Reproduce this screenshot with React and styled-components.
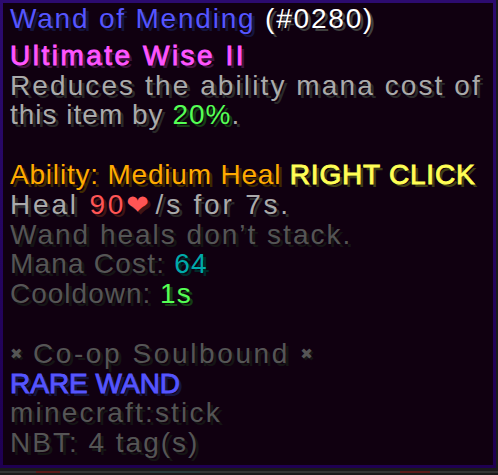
import React from "react";
import styled, { createGlobalStyle } from "styled-components";

const Global = createGlobalStyle`
  html, body { margin: 0; padding: 0; }
  body {
    background: #1a1a1a;
    width: 498px;
    height: 475px;
    overflow: hidden;
  }
`;

const MC = {
  white: ["#ffffff", "#3f3f3f"],
  blue: ["#5555ff", "#15153f"],
  pink: ["#ff55ff", "#3f153f"],
  gray: ["#aaaaaa", "#2a2a2a"],
  dgray: ["#555555", "#151515"],
  green: ["#55ff55", "#153f15"],
  gold: ["#ffaa00", "#3f2a00"],
  yellow: ["#ffff55", "#3f3f15"],
  red: ["#ff5555", "#3f1515"],
  aqua: ["#00aaaa", "#002a2a"],
};

const Tooltip = styled.div`
  box-sizing: border-box;
  width: 496px;
  height: 468px;
  border: 3px solid;
  border-image: linear-gradient(180deg, #2c0b6f, #1f0052) 1;
  background: #100010;
  padding: 1px 7px 0 7px;
  font-family: "Liberation Sans", Arial, sans-serif;
  font-size: 28px;
`;

const Line = styled.div`
  height: 29.8px;
  line-height: 29.8px;
  white-space: nowrap;
  letter-spacing: ${(p) => (p.$ls ?? 2)}px;
  margin-bottom: ${(p) => (p.$first ? "7px" : "0")};
`;

const T = styled.span`
  color: ${(p) => MC[p.$c][0]};
  text-shadow: 3px 3px 0 ${(p) => MC[p.$c][1]};
  -webkit-text-stroke: ${(p) => (p.$b ? `0.9px ${MC[p.$c][0]}` : "0")};
  letter-spacing: ${(p) => (p.$ls !== undefined ? `${p.$ls}px` : "inherit")};
`;

const Heart = styled.span`
  font-family: "DejaVu Sans", sans-serif;
  font-size: 27px;
  margin-right: 4px;
  color: #ff5555;
  text-shadow: 3px 3px 0 #3f1515;
`;

const Cross = styled.span`
  font-family: "DejaVu Sans", sans-serif;
  font-size: 15px;
  letter-spacing: 0;
  vertical-align: 4px;
  color: #555555;
  text-shadow: 2px 2px 0 #151515;
`;

const Strip = styled.div`
  margin-top: 3px;
  height: 2px;
  width: 498px;
  background: linear-gradient(
    90deg,
    #333 0 36px,
    #5a1a1a 36px 60px,
    #333 60px 150px,
    #2a3a3a 150px 200px,
    #333 200px 400px,
    #5a1a1a 400px 430px,
    #333 430px
  );
`;

export default function App() {
  return (
    <>
      <Global />
      <Tooltip>
        <Line $first $ls={1.8}>
          <T $c="blue">Wand of Mending </T>
          <T $c="white">(#0280)</T>
        </Line>
        <Line>
          <T $c="pink" $b $ls={2.5}>Ultimate Wise II</T>
        </Line>
        <Line $ls={2.1}>
          <T $c="gray">Reduces the ability mana cost of</T>
        </Line>
        <Line $ls={1}>
          <T $c="gray">this item by </T>
          <T $c="green">20%</T>
          <T $c="gray">.</T>
        </Line>
        <Line>&nbsp;</Line>
        <Line $ls={0.8}>
          <T $c="gold">Ability: Medium Heal </T>
          <T $c="yellow" $b>RIGHT CLICK</T>
        </Line>
        <Line $ls={2.8}>
          <T $c="gray">Heal </T>
          <T $c="red">90</T>
          <Heart>❤</Heart>
          <T $c="gray">/s for 7s.</T>
        </Line>
        <Line>
          <T $c="dgray">Wand heals don’t stack.</T>
        </Line>
        <Line $ls={1.2}>
          <T $c="dgray">Mana Cost: </T>
          <T $c="aqua">64</T>
        </Line>
        <Line $ls={1}>
          <T $c="dgray">Cooldown: </T>
          <T $c="green">1s</T>
        </Line>
        <Line>&nbsp;</Line>
        <Line $ls={2.6}>
          <Cross>✖</Cross>
          <T $c="dgray"> Co-op Soulbound </T>
          <Cross>✖</Cross>
        </Line>
        <Line>
          <T $c="blue" $b $ls={0}>RARE WAND</T>
        </Line>
        <Line $ls={2.2}>
          <T $c="dgray">minecraft:stick</T>
        </Line>
        <Line>
          <T $c="dgray">NBT: 4 tag(s)</T>
        </Line>
      </Tooltip>
      <Strip />
    </>
  );
}
